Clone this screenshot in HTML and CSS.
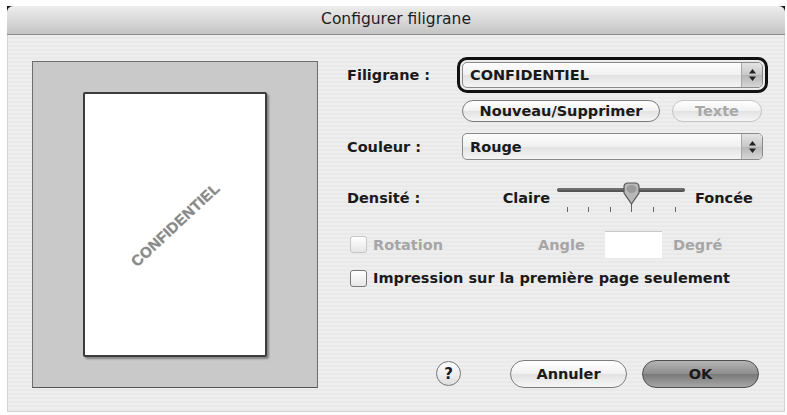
FILE: index.html
```html
<!DOCTYPE html>
<html lang="fr">
<head>
    <meta charset="UTF-8">
    <meta name="viewport" content="width=device-width, initial-scale=1.0">
    <title>Configurer filigrane</title>
    <link rel="stylesheet" href="styles.css">
</head>
<body>
    <div class="window">
        <div class="titlebar">Configurer filigrane</div>
        <div class="content">
            <!-- Preview -->
            <div class="preview">
                <div class="page">
                    <span class="mark">CONFIDENTIEL</span>
                </div>
            </div>

            <!-- Settings -->
            <div class="form">
                <div class="row row-popup">
                    <span class="label">Filigrane :</span>
                    <div class="popup focused">
                        <span class="popup-text">CONFIDENTIEL</span>
                        <span class="arrows">
                            <svg width="9" height="14" viewBox="0 0 9 14"><path d="M4.5 1 L8 5.5 H1 Z M4.5 13 L8 8.5 H1 Z" fill="#222"/></svg>
                        </span>
                    </div>
                </div>
                <div class="row row-buttons">
                    <button class="pill btn-new">Nouveau/Supprimer</button>
                    <button class="pill btn-text" disabled>Texte</button>
                </div>
                <div class="row row-popup">
                    <span class="label">Couleur :</span>
                    <div class="popup">
                        <span class="popup-text">Rouge</span>
                        <span class="arrows">
                            <svg width="9" height="14" viewBox="0 0 9 14"><path d="M4.5 1 L8 5.5 H1 Z M4.5 13 L8 8.5 H1 Z" fill="#222"/></svg>
                        </span>
                    </div>
                </div>
                <div class="row row-slider">
                    <span class="label">Densité :</span>
                    <span class="slider-end">Claire</span>
                    <svg class="slider" width="134" height="34" viewBox="0 0 134 34">
                        <line x1="5" y1="9" x2="129" y2="9" stroke="#555" stroke-width="4" stroke-linecap="round"/>
                        <line x1="5" y1="8" x2="129" y2="8" stroke="#888" stroke-width="1" stroke-linecap="round"/>
                        <g stroke="#666" stroke-width="1">
                            <line x1="13.5" y1="26" x2="13.5" y2="31"/>
                            <line x1="34.5" y1="26" x2="34.5" y2="31"/>
                            <line x1="56.5" y1="26" x2="56.5" y2="31"/>
                            <line x1="77.5" y1="23" x2="77.5" y2="31"/>
                            <line x1="99.5" y1="26" x2="99.5" y2="31"/>
                            <line x1="121.5" y1="26" x2="121.5" y2="31"/>
                        </g>
                        <path d="M70 6 Q70 2 74 2 H81 Q85 2 85 6 V12 L77.5 23 L70 12 Z" fill="#b9b9b9" stroke="#555" stroke-width="1.2"/>
                        <ellipse cx="77.5" cy="8" rx="5" ry="4" fill="#9a9a9a"/>
                    </svg>
                    <span class="slider-end right">Foncée</span>
                </div>
                <div class="row row-rotation">
                    <label class="check check-rot disabled"><span class="box"></span>Rotation</label>
                    <span class="angle disabled">Angle</span>
                    <span class="field"></span>
                    <span class="degree disabled">Degré</span>
                </div>
                <div class="row row-check">
                    <label class="check"><span class="box"></span>Impression sur la première page seulement</label>
                </div>
                <div class="row row-actions">
                    <span class="help">?</span>
                    <button class="pill btn-cancel">Annuler</button>
                    <button class="pill btn-ok">OK</button>
                </div>
            </div>
        </div>
    </div>
</body>
</html>
```

FILE: styles.css
```css
* {
    margin: 0;
    padding: 0;
    box-sizing: border-box;
    font-family: 'DejaVu Sans', Verdana, sans-serif;
}
body {
    background-color: #fff;
}
.window {
    margin: 6px 0 0 7px;
    width: 778px;
    height: 406px;
    background-color: #111;
    display: flex;
    flex-direction: column;
}
.titlebar {
    height: 29px;
    border-radius: 6px 6px 0 0;
    background: linear-gradient(#ededed, #d9d9d9 50%, #c4c4c4);
    border-bottom: 1px solid #8c8c8c;
    text-align: center;
    font-size: 15.5px;
    line-height: 27px;
    color: #1e1e1e;
}
.content {
    flex: 1;
    display: flex;
    background: repeating-linear-gradient(#eeeeee 0, #eeeeee 2px, #e9e9e9 2px, #e9e9e9 4px);
    border-left: 1px solid #d4d4d4;
    border-right: 1px solid #d4d4d4;
    border-bottom: 1px solid #d4d4d4;
}
.preview {
    margin: 26px 0 0 24px;
    width: 286px;
    height: 327px;
    background-color: #c9c9c9;
    border: 1px solid #6e6e6e;
    border-bottom-color: #555;
    display: flex;
    justify-content: center;
    align-items: center;
}
.page {
    width: 184px;
    height: 265px;
    background-color: #fff;
    border: 2px solid #3c3c3c;
    border-radius: 2px;
    box-shadow: 2px 2px 2px rgba(0, 0, 0, 0.35);
    display: flex;
    justify-content: center;
    align-items: center;
}
.mark {
    font-family: 'Liberation Sans', Arial, sans-serif;
    font-weight: bold;
    font-size: 15px;
    letter-spacing: 0.3px;
    color: #8a8a8a;
    text-shadow: 0 0 1px #999;
    transform: rotate(-43deg);
}
.form {
    margin-left: 29px;
    padding-top: 27px;
    width: 425px;
}
.row {
    display: flex;
    align-items: center;
    font-size: 14.5px;
    font-weight: bold;
    color: #1a1a1a;
}
.label {
    width: 115px;
    flex-shrink: 0;
}
.row-popup {
    height: 26px;
}
.row-popup + .row-buttons {
    margin-top: 12px;
}
.row-buttons {
    height: 22px;
    padding-left: 115px;
}
.row-buttons + .row-popup {
    margin-top: 11px;
    height: 27px;
}
.popup {
    width: 301px;
    height: 100%;
    border: 1px solid #8a8a8a;
    border-radius: 5px;
    background: linear-gradient(#fdfdfd, #f0f0f0 50%, #e2e2e2 52%, #f4f4f4);
    display: flex;
    align-items: center;
    overflow: hidden;
}
.popup.focused {
    outline: 3px solid #111;
    outline-offset: 2px;
}
.popup-text {
    flex: 1;
    padding-left: 7px;
}
.arrows {
    width: 21px;
    height: 100%;
    border-left: 1px solid #a8a8a8;
    background: linear-gradient(#e4e4e4, #c8c8c8 50%, #b6b6b6 52%, #d6d6d6);
    display: flex;
    justify-content: center;
    align-items: center;
}
.pill {
    height: 22px;
    border: 1px solid #7c7c7c;
    border-radius: 11px;
    background: linear-gradient(#ffffff, #f1f1f1 50%, #e2e2e2 52%, #f6f6f6);
    font-size: 14.5px;
    font-weight: bold;
    color: #1a1a1a;
}
.btn-new {
    width: 198px;
}
.btn-text {
    width: 90px;
    margin-left: 12px;
    border-color: #c4c4c4;
    color: #a8a8a8;
}
.row-slider {
    margin-top: 21px;
    height: 34px;
}
.slider-end {
    width: 88px;
    text-align: right;
}
.slider-end.right {
    width: auto;
    margin-left: 7px;
}
.slider {
    margin-left: 4px;
}
.row-rotation {
    margin-top: 16px;
    height: 27px;
}
.check {
    display: flex;
    align-items: center;
    padding-left: 3px;
}
.box {
    width: 17px;
    height: 17px;
    margin-right: 6px;
    border: 1px solid #7a7a7a;
    border-radius: 3px;
    background: linear-gradient(#ffffff, #e6e6e6);
}
.check-rot {
    width: 191px;
}
.disabled {
    color: #a6a6a6;
}
.disabled .box {
    border-color: #c6c6c6;
}
.angle {
    width: 67px;
}
.field {
    width: 57px;
    height: 27px;
    background-color: #fff;
    border-top: 1px solid #c8c8c8;
}
.degree {
    margin-left: 11px;
}
.row-check {
    margin-top: 10px;
    height: 20px;
}
.row-actions {
    margin-top: 71px;
    height: 29px;
}
.help {
    margin-left: 89px;
    width: 25px;
    height: 25px;
    border: 1px solid #777;
    border-radius: 50%;
    background: linear-gradient(#ffffff, #dedede);
    display: flex;
    justify-content: center;
    align-items: center;
    font-size: 15px;
}
.btn-cancel, .btn-ok {
    width: 117px;
    height: 28px;
    border-radius: 14px;
}
.btn-cancel {
    margin-left: 49px;
}
.btn-ok {
    margin-left: 15px;
    border-color: #4e4e4e;
    background: linear-gradient(#b4b4b4, #8e8e8e 50%, #7a7a7a 52%, #a6a6a6);
}
```
